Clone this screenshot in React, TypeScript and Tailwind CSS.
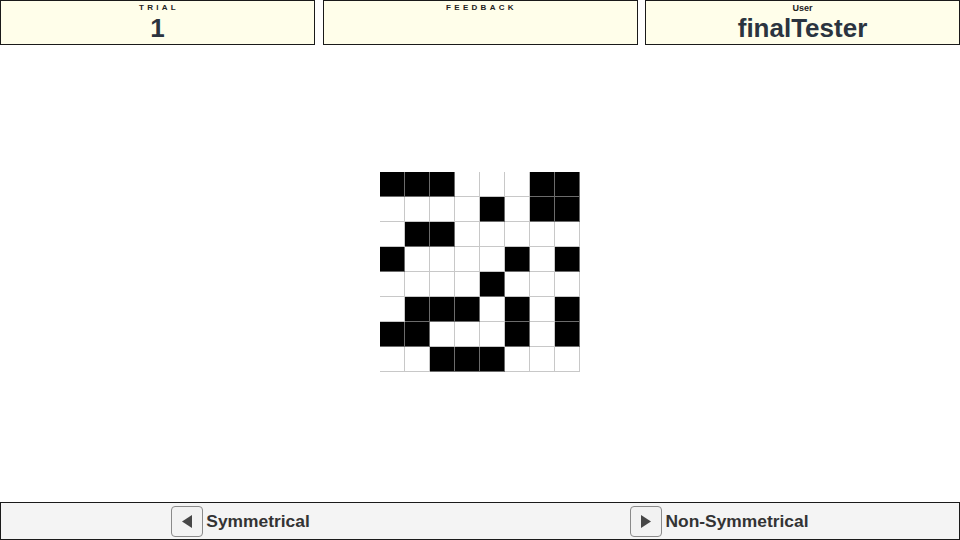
import { ReactNode } from "react";

const PATTERN = [
  [1, 1, 1, 0, 0, 0, 1, 1],
  [0, 0, 0, 0, 1, 0, 1, 1],
  [0, 1, 1, 0, 0, 0, 0, 0],
  [1, 0, 0, 0, 0, 1, 0, 1],
  [0, 0, 0, 0, 1, 0, 0, 0],
  [0, 1, 1, 1, 0, 1, 0, 1],
  [1, 1, 0, 0, 0, 1, 0, 1],
  [0, 0, 1, 1, 1, 0, 0, 0],
];

function InfoBox({ label, value, spaced = true }: { label: string; value?: string; spaced?: boolean }) {
  return (
    <div className="w-[315px] h-[45px] border border-[#1a1a1a] bg-[#fffeea] flex flex-col items-center pt-[2px]">
      <div
        className={
          spaced
            ? "text-[8px] leading-[10px] font-bold tracking-[3.3px] text-[#222] pl-[3px]"
            : "text-[9px] leading-[10px] font-bold text-[#222]"
        }
      >
        {label}
      </div>
      {value && <div className="text-[26px] leading-[30px] font-bold text-[#2b3440]">{value}</div>}
    </div>
  );
}

function ChoiceButton({ children, dir }: { children: ReactNode; dir: "left" | "right" }) {
  return (
    <div className="flex items-center gap-[3px]">
      <button className="w-[32px] h-[31px] rounded-[4px] border border-[#8a8a8a] bg-[#f2f2f2] flex items-center justify-center">
        {dir === "left" ? (
          <svg width="10" height="13" viewBox="0 0 10 13">
            <polygon points="10,0 10,13 0,6.5" fill="#474747" />
          </svg>
        ) : (
          <svg width="10" height="13" viewBox="0 0 10 13">
            <polygon points="0,0 0,13 10,6.5" fill="#474747" />
          </svg>
        )}
      </button>
      <span className="text-[17.4px] font-bold text-[#333]">{children}</span>
    </div>
  );
}

export default function App() {
  return (
    <div className="w-[960px] h-[540px] flex flex-col bg-white font-['Liberation_Sans',Arial,sans-serif]">
      <header className="flex justify-between">
        <InfoBox label="TRIAL" value="1" />
        <InfoBox label="FEEDBACK" />
        <InfoBox label="User" value="finalTester" spaced={false} />
      </header>

      <main className="flex-1 flex items-center justify-center pb-[3px]">
        <div className="grid grid-cols-8">
          {PATTERN.flat().map((cell, i) => (
            <div
              key={i}
              className={
                cell
                  ? "w-[25px] h-[25px] bg-black border-r border-b border-[#6b6b6b]"
                  : "w-[25px] h-[25px] bg-white border-r border-b border-[#c8c8c8]"
              }
            />
          ))}
        </div>
      </main>

      <footer className="h-[38px] border border-[#1a1a1a] bg-[#f4f4f4] flex">
        <div className="flex-1 flex items-center justify-center">
          <ChoiceButton dir="left">Symmetrical</ChoiceButton>
        </div>
        <div className="flex-1 flex items-center justify-center">
          <ChoiceButton dir="right">Non-Symmetrical</ChoiceButton>
        </div>
      </footer>
    </div>
  );
}
